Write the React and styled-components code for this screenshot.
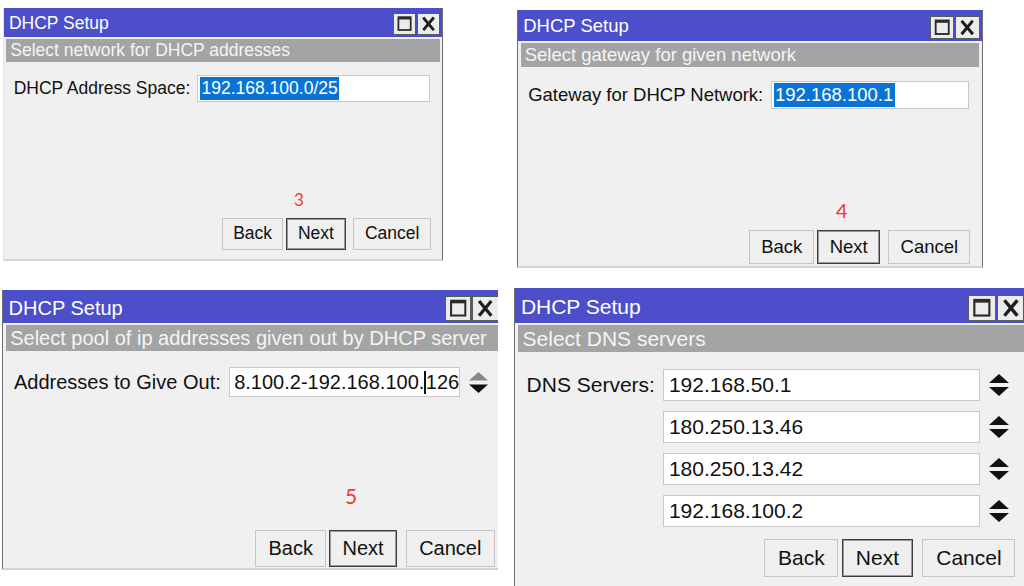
import React from 'react'
import styled, { createGlobalStyle } from 'styled-components'

const GlobalStyle = createGlobalStyle`
  html, body {
    margin: 0;
    padding: 0;
    background: #ffffff;
  }
  body {
    font-family: "Liberation Sans", Arial, sans-serif;
  }
`;

const dialogs = [
  {
    crop: { left: 3, top: 8, w: 440, h: 253 },
    win: { w: 440, h: 253, fs: 17.5, pb: 9, pr: 0.7, fr: 0.63, edge: false },
    subtitle: 'Select network for DHCP addresses',
    label: 'DHCP Address Space:',
    fields: [{ text: '192.168.100.0/25', selected: true }],
    marker: { n: 3, x: 290, y: 183, size: 17 },
  },
  {
    crop: { left: 5, top: 10, w: 466, h: 258 },
    win: { w: 466, h: 258, fs: 18.5, pb: 2, pr: 0.7, fr: 0.63, edge: true },
    subtitle: 'Select gateway for given network',
    label: 'Gateway for DHCP Network:',
    fields: [{ text: '192.168.100.1', selected: true }],
    marker: { n: 4, x: 318, y: 190, size: 20 },
  },
  {
    crop: { left: 2, top: 10, w: 496, h: 280 },
    win: { w: 500, h: 280, fs: 20, pb: 1, pr: 0.75, fr: 0.32, edge: true },
    subtitle: 'Select pool of ip addresses given out by DHCP server',
    label: 'Addresses to Give Out:',
    fields: [{ text: '8.100.2-192.168.100.', after: '126', caret: true, spin: true, dimUp: true }],
    marker: { n: 5, x: 342, y: 195, size: 21 },
  },
  {
    crop: { left: 2, top: 8, w: 510, h: 298 },
    win: { w: 514, h: 300, fs: 21, pb: 9, pr: 0.86, fr: 0.55, edge: true },
    subtitle: 'Select DNS servers',
    label: 'DNS Servers:',
    fields: [
      { text: '192.168.50.1', spin: true },
      { text: '180.250.13.46', spin: true },
      { text: '180.250.13.42', spin: true },
      { text: '192.168.100.2', spin: true },
    ],
  },
];

function MaximizeIcon() {
  return (
    <svg viewBox="0 0 24 22">
      <rect x="5" y="3.5" width="14" height="14.5" fill="none" stroke="#2b2b2b" strokeWidth="2" />
      <rect x="5" y="3" width="14" height="3" fill="#2b2b2b" />
    </svg>
  );
}

function CloseIcon() {
  return (
    <svg viewBox="0 0 24 22">
      <path d="M7 5 L17 17 M17 5 L7 17" stroke="#1e1e1e" strokeWidth="3.2" strokeLinecap="square" />
    </svg>
  );
}

function SpinIcon({ dimUp }) {
  return (
    <Spinner viewBox="0 0 20 22">
      <polygon points="10,0 20,9 0,9" fill={dimUp ? '#7f8c86' : '#111'} />
      <polygon points="0,13 20,13 10,22" fill="#111" />
    </Spinner>
  );
}

function Dialog({ d }) {
  return (
    <Crop $left={d.crop.left} $top={d.crop.top} $w={d.crop.w} $h={d.crop.h}>
      <Window $w={d.win.w} $h={d.win.h} $fs={d.win.fs} $edge={d.win.edge}>
        <TitleBar>
          <Title>DHCP Setup</Title>
          <TitleButtons>
            <TitleButton><MaximizeIcon /></TitleButton>
            <TitleButton><CloseIcon /></TitleButton>
          </TitleButtons>
        </TitleBar>
        <SubHeader>{d.subtitle}</SubHeader>
        <Body $pr={d.win.pr}>
          <Label>{d.label}</Label>
          <Fields>
            {d.fields.map((f, i) => (
              <FieldRow key={i}>
                <Field $plain={!f.selected}>
                  {f.selected ? <Selected>{f.text}</Selected> : f.text}
                  {f.caret && <Caret />}
                  {f.after}
                </Field>
                {f.spin && <SpinIcon dimUp={f.dimUp} />}
              </FieldRow>
            ))}
          </Fields>
        </Body>
        <Footer $pb={d.win.pb} $fr={d.win.fr}>
          <Button $w={3.53}>Back</Button>
          <Button $w={3.39} $default>Next</Button>
          <Button $w={4.43} $gap>Cancel</Button>
        </Footer>
        {d.marker && (
          <Marker $x={d.marker.x} $y={d.marker.y} $size={d.marker.size}>{d.marker.n}</Marker>
        )}
      </Window>
    </Crop>
  );
}

export default function App() {
  return (
    <>
      <GlobalStyle />
      <Page>
        {dialogs.map((d, i) => <Dialog key={i} d={d} />)}
      </Page>
    </>
  );
}

// Styles

const Page = styled.div`
  width: 1024px;
  height: 586px;
  overflow: hidden;
  display: grid;
  grid-template-columns: 512px 512px;
  grid-template-rows: 280px 306px;
  background: #ffffff;
`;

const Crop = styled.div`
  width: ${p => p.$w}px;
  height: ${p => p.$h}px;
  margin: ${p => p.$top}px 0 0 ${p => p.$left}px;
  overflow: hidden;
`;

const Window = styled.div`
  position: relative;
  box-sizing: border-box;
  width: ${p => p.$w}px;
  height: ${p => p.$h}px;
  font-size: ${p => p.$fs}px;
  display: flex;
  flex-direction: column;
  background: #f0f0f0;
  color: #111;
  border-left: 1px solid ${p => (p.$edge ? '#6e6e6e' : '#e4e4e4')};
  border-right: 1px solid #6e6e6e;
  border-bottom: 2px solid #d4d4d4;
`;

const TitleBar = styled.div`
  flex: none;
  height: 1.65em;
  display: flex;
  align-items: center;
  padding: 0 0.12em 0 0.28em;
  background: #4c4fc9;
  color: #ffffff;
`;

const Title = styled.span`
  flex: 1;
  line-height: 1;
  padding-top: 0.12em;
  white-space: nowrap;
`;

const TitleButtons = styled.div`
  display: flex;
  gap: 1px;
  align-self: flex-end;
  margin-bottom: 0.1em;
`;

const TitleButton = styled.div`
  box-sizing: border-box;
  width: 1.32em;
  height: 1.24em;
  display: flex;
  align-items: center;
  justify-content: center;
  background: #ececec;
  border: 1px solid #5a5a5a;

  svg {
    width: 100%;
    height: 100%;
  }
`;

const SubHeader = styled.div`
  flex: none;
  height: 1.3em;
  margin: 0.12em 0.14em 0;
  padding-left: 0.22em;
  display: flex;
  align-items: center;
  background: #a4a4a4;
  color: #f4f4f4;
  white-space: nowrap;
  overflow: hidden;
`;

const Body = styled.div`
  flex: 1;
  display: grid;
  grid-template-columns: auto 1fr;
  column-gap: 0.4em;
  align-content: start;
  padding: 0.78em ${p => p.$pr}em 0 0.55em;
`;

const Label = styled.div`
  line-height: 1.52em;
  white-space: nowrap;
`;

const Fields = styled.div`
  display: flex;
  flex-direction: column;
  gap: 0.48em;
`;

const FieldRow = styled.div`
  display: flex;
  align-items: center;
  gap: 0.45em;
`;

const Field = styled.div`
  flex: 1;
  min-width: 0;
  box-sizing: border-box;
  height: 1.52em;
  display: flex;
  align-items: center;
  padding-left: ${p => (p.$plain ? '0.22em' : '0.1em')};
  background: #ffffff;
  border: 1px solid #c8c8c8;
  white-space: nowrap;
  overflow: hidden;
`;

const Selected = styled.span`
  padding: 0 0.08em;
  line-height: 1.28em;
  background: #0a74d6;
  color: #ffffff;
`;

const Caret = styled.span`
  display: inline-block;
  width: 1.5px;
  height: 1.15em;
  background: #111;
`;

const Spinner = styled.svg`
  flex: none;
  width: 0.95em;
  height: 1.05em;
`;

const Footer = styled.div`
  flex: none;
  display: flex;
  justify-content: flex-end;
  padding: 0 ${p => p.$fr}em ${p => p.$pb}px 0;
`;

const Button = styled.div`
  box-sizing: border-box;
  width: ${p => p.$w}em;
  height: 1.83em;
  margin-left: ${p => (p.$gap ? '0.45em' : '0.16em')};
  display: flex;
  align-items: center;
  justify-content: center;
  background: #efefef;
  border: 1px solid ${p => (p.$default ? '#3c3c3c' : '#c6c6c6')};
  box-shadow: ${p => (p.$default ? 'inset 0 0 0 1px #9a9a9a' : 'none')};
  color: #111;
`;

const Marker = styled.div`
  position: absolute;
  left: ${p => p.$x}px;
  top: ${p => p.$y}px;
  font-family: Lato, "Open Sans", sans-serif;
  font-size: ${p => p.$size}px;
  line-height: 1;
  color: #ee3a35;
`;
